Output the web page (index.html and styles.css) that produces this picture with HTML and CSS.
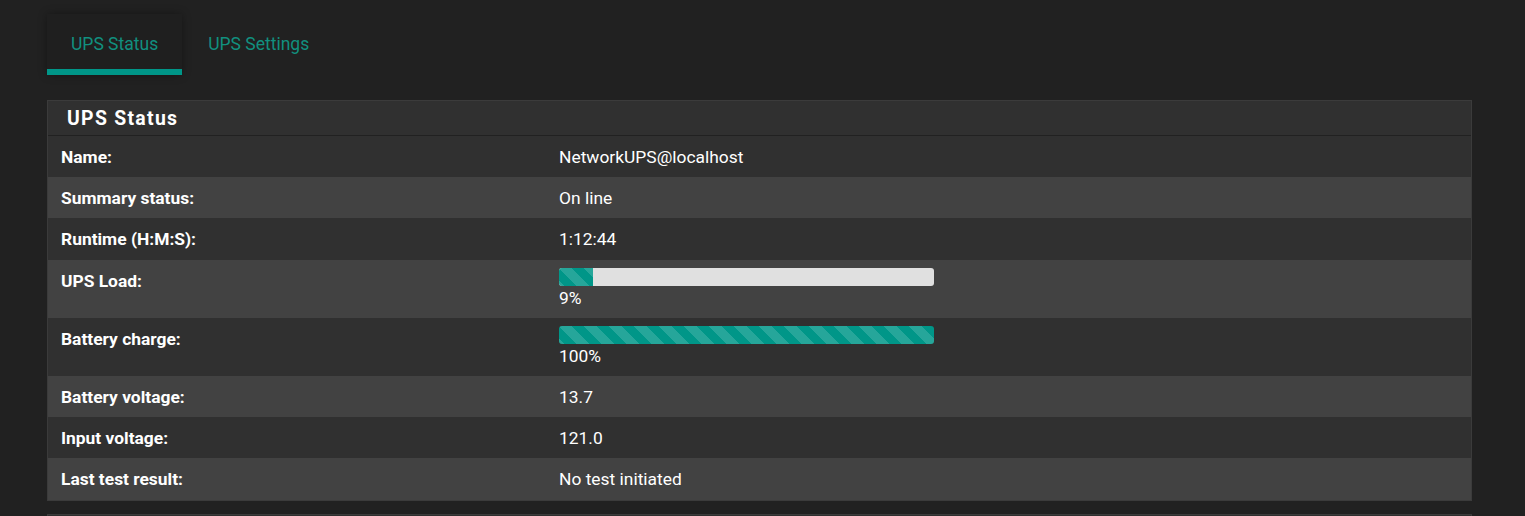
FILE: index.html
```html
<!DOCTYPE html>
<html lang="en">
<head>
<meta charset="utf-8">
<title>UPS Status</title>
<link rel="stylesheet" href="styles.css">
</head>
<body>
<div class="page">
  <nav class="tabs">
    <a class="tab active">UPS Status</a>
    <a class="tab">UPS Settings</a>
  </nav>
  <section class="panel">
    <h2 class="panel-title">UPS Status</h2>
    <table class="status">
      <tr><th>Name:</th><td>NetworkUPS@localhost</td></tr>
      <tr><th>Summary status:</th><td>On line</td></tr>
      <tr><th>Runtime (H:M:S):</th><td>1:12:44</td></tr>
      <tr><th>UPS Load:</th><td><div class="bar"><div class="fill" style="width:9%"></div></div><div>9%</div></td></tr>
      <tr><th>Battery charge:</th><td><div class="bar"><div class="fill" style="width:100%"></div></div><div>100%</div></td></tr>
      <tr><th>Battery voltage:</th><td>13.7</td></tr>
      <tr><th>Input voltage:</th><td>121.0</td></tr>
      <tr><th>Last test result:</th><td>No test initiated</td></tr>
    </table>
  </section>
  <section class="panel next"></section>
</div>
</body>
</html>
```
FILE: styles.css
```css
html, body {
  margin: 0;
  padding: 0;
  background: #212121;
  font-family: Roboto, "Liberation Sans", sans-serif;
  color: #ffffff;
  overflow: hidden;
}
.page {
  padding: 14px 53px 0 47px;
}
.tabs {
  display: flex;
  gap: 2px;
  height: 61px;
}
.tab {
  display: flex;
  align-items: center;
  padding: 4px 24px 0;
  font-size: 17.5px;
  color: #11907f;
  box-sizing: border-box;
  border-bottom: 6px solid transparent;
}
.tab.active {
  background: #1f1f1f;
  border-bottom-color: #009688;
  box-shadow: 0 0 8px rgba(0,0,0,0.35);
}
.panel {
  margin-top: 25px;
  background: #303030;
  border: 1px solid #3b3b3b;
}
.panel-title {
  margin: 0;
  height: 34px;
  line-height: 35px;
  padding: 0 19px;
  font-size: 19.4px;
  font-weight: 700;
  letter-spacing: 1.3px;
  border-bottom: 1px solid #212121;
}
.status {
  width: 100%;
  border-collapse: collapse;
  font-size: 17.4px;
  line-height: 21.2px;
}
.status th, .status td {
  padding: 11px 13px 9px;
  text-align: left;
  vertical-align: top;
}
.status th {
  width: 35%;
  font-weight: 700;
}
.status tr:nth-child(odd) { background: #303030; }
.status tr:nth-child(even) { background: #424242; }
.bar {
  width: 375px;
  height: 18px;
  margin: -3px 0 2px;
  background: #e0e0e0;
  border-radius: 3px;
  overflow: hidden;
}
.fill {
  height: 100%;
  background-color: #009688;
  background-image: linear-gradient(45deg, rgba(255,255,255,0.15) 25%, transparent 25%, transparent 50%, rgba(255,255,255,0.15) 50%, rgba(255,255,255,0.15) 75%, transparent 75%, transparent);
  background-size: 25px 25px;
}
.panel.next {
  margin-top: 13px;
  height: 40px;
}
```
